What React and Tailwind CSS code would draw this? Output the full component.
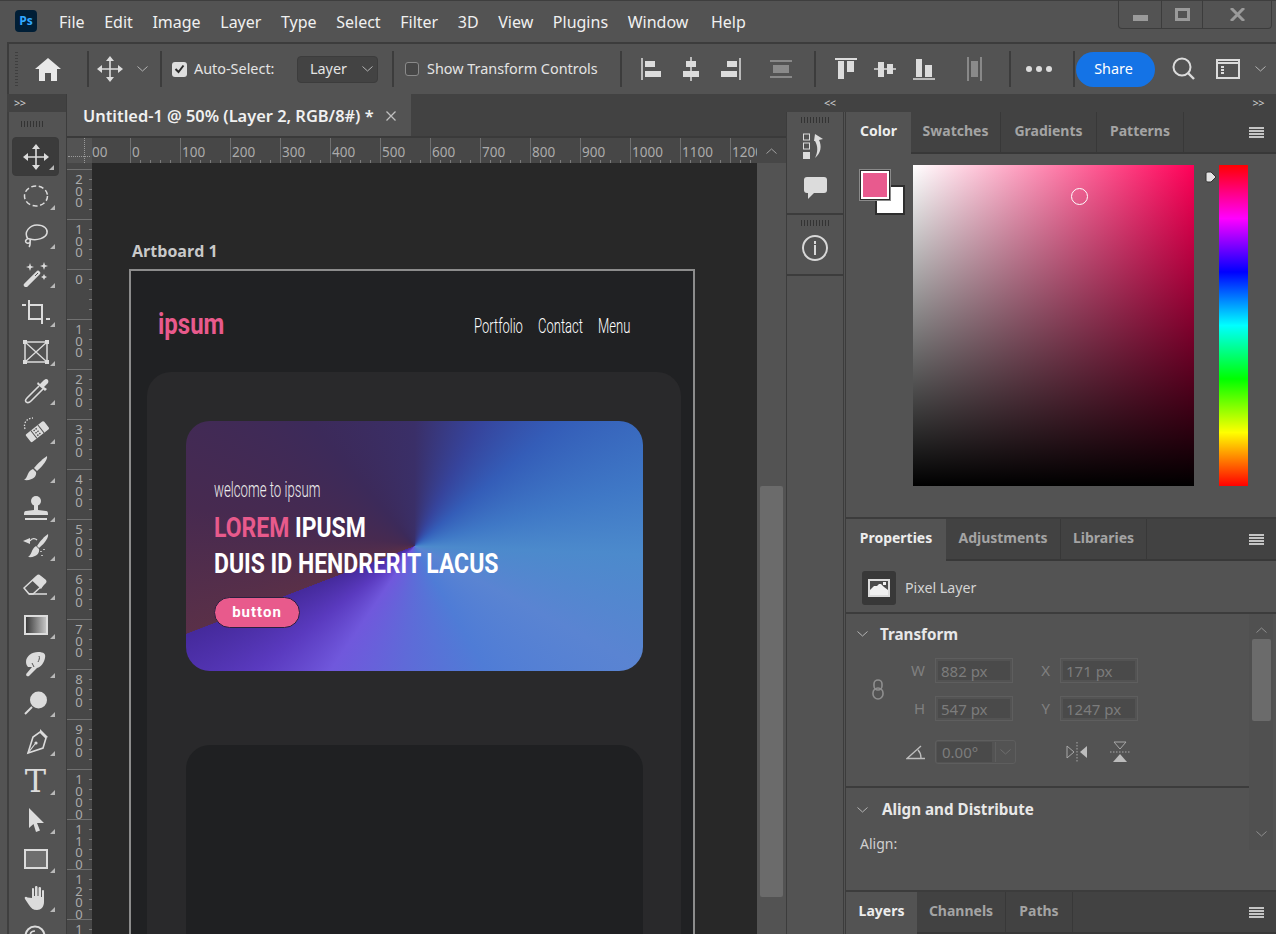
import React from 'react';

const MENU = ['File', 'Edit', 'Image', 'Layer', 'Type', 'Select', 'Filter', '3D', 'View', 'Plugins', 'Window'];
const RULER_H = ['0', '100', '200', '300', '400', '500', '600', '700', '800', '900', '1000', '1100', '1200'];
const RULER_V = ['200', '100', '0', '100', '200', '300', '400', '500', '600', '700', '800', '900', '1000', '1100', '1200', '1300'];

const Svg = ({ w = 26, h = 26, className = '', children }) => (
  <svg width={w} height={h} viewBox={`0 0 ${w} ${h}`} className={className} fill="none">
    {children}
  </svg>
);

const C = '#dcdcdc';

const MoveIcon = () => (
  <Svg w={26} h={26}>
    <path d="M13 3V23M3 13H23" stroke={C} strokeWidth="1.6" />
    <path d="M13 0L9 5H17ZM13 26L9 21H17ZM0 13L5 9V17ZM26 13L21 9V17Z" fill={C} />
  </Svg>
);

const TOOLS = [
  <MoveIcon />,
  <Svg><ellipse cx="13" cy="13" rx="11.5" ry="10" stroke={C} strokeWidth="1.5" strokeDasharray="5 2.6" /></Svg>,
  <Svg><path d="M5 17C0 10 7 3 14 3C21 3 25 7 24 11C23 16 14 19 7 17C3 16 1 20 4 21C7 22 8 19 7 17C7 20 8 23 6 25" stroke={C} strokeWidth="1.5" /></Svg>,
  <Svg>
    <path d="M3 24L15 12" stroke={C} strokeWidth="4.5" strokeLinecap="round" />
    <path d="M12 15L15 12" stroke="#535353" strokeWidth="1" />
    <path d="M7 2L8 5L11 6L8 7L7 10L6 7L3 6L6 5ZM21 1L22 4L25 5L22 6L21 9L20 6L17 5L20 4ZM21 13L22 15L24 16L22 17L21 19L20 17L18 16L20 15Z" fill={C} />
  </Svg>,
  <Svg w={28} h={28}><path d="M0 6H4M7 1V20H21M7 6H20V25M24 20H28" stroke={C} strokeWidth="2" /></Svg>,
  <Svg>
    <rect x="2" y="3" width="22" height="20" stroke={C} strokeWidth="1.5" />
    <path d="M2 3L24 23M24 3L2 23" stroke={C} strokeWidth="1.3" />
    <path d="M0 1H4V5H0ZM22 1H26V5H22ZM0 21H4V25H0ZM22 21H26V25H22Z" fill={C} />
  </Svg>,
  <Svg>
    <path d="M16 8L4 20C2 22 2 24 4 24.5C6 25 7 24 8 23L20 11" stroke={C} strokeWidth="1.6" />
    <path d="M14 6L22 13L24 11L21 9L25 5C26 3 25 1 23 1C22 1 21 2 20 3L17 6L15 4Z" fill={C} />
  </Svg>,
  <Svg>
    <g transform="rotate(-38 14 15)">
      <rect x="3" y="10" width="23" height="10" rx="1.5" fill={C} />
      <path d="M10 10V20M19 10V20" stroke="#535353" strokeWidth="1" />
      <path d="M12 12H17M12 15H17M12 18H17" stroke="#535353" strokeWidth="1.4" strokeDasharray="1.5 1" />
    </g>
    <path d="M2 12C0 6 4 1 10 1" stroke={C} strokeWidth="1.3" strokeDasharray="1.5 1.5" />
  </Svg>,
  <Svg>
    <path d="M24 0C25 3 20 10 14 15L11 12C15 7 21 2 24 0Z" fill={C} />
    <path d="M10 13L13 16C14 20 10 25 1 24C5 22 4 15 10 13Z" fill={C} />
  </Svg>,
  <Svg>
    <circle cx="13" cy="6" r="5" fill={C} />
    <path d="M11 10H15V15L23 16C25 16 25 18 25 20H1C1 18 1 16 3 16L11 15Z" fill={C} />
    <path d="M2 24H24" stroke={C} strokeWidth="2" />
  </Svg>,
  <Svg w={28} h={26}>
    <path d="M26 0C27 3 23 9 17 14L15 12C18 7 23 2 26 0Z" fill={C} />
    <path d="M14 12L17 15C18 19 14 24 6 23C10 21 9 15 14 12Z" fill={C} />
    <path d="M8 7C10 4 13 4 15 6" stroke={C} strokeWidth="1.3" />
    <path d="M1 7L8 4V10Z" fill={C} />
    <path d="M19 17V18M22 15V16M20 21V22" stroke={C} strokeWidth="1.5" />
  </Svg>,
  <Svg w={26} h={24}>
    <path d="M1 14L14 2C15 1 16 1 17 2L22 6C23 7 23 8 22 9L10 20H6Z" stroke={C} strokeWidth="1.5" />
    <path d="M9 6.5L18 15L22 9C23 8 23 7 22 6L17 2C16 1 15 1 14 2Z" fill={C} />
    <path d="M6 20H24" stroke={C} strokeWidth="1.5" />
  </Svg>,
  <div className="w-[24px] h-[20px] border-2 border-[#dcdcdc] bg-[linear-gradient(to_right,#3a3a3a,#c4c4c4)]" />,
  <Svg>
    <path d="M3 11C3 5 9 1 15 1C21 1 23 3 22 7C21 12 18 16 14 17L6 25C4 26 2 24 4 22L9 16L5 16C4 15 3 13 3 11Z" fill={C} />
    <path d="M11 16L9 12M15 11C16 9 17 7 16 5" stroke="#535353" strokeWidth="1" />
  </Svg>,
  <Svg>
    <circle cx="15.5" cy="10" r="8.5" fill={C} />
    <path d="M9 17L2 24" stroke={C} strokeWidth="2" />
  </Svg>,
  <Svg>
    <path d="M17 3L23 9L20 19L5 24L10 8Z" stroke={C} strokeWidth="1.6" />
    <path d="M17 0L25 8L23 9L17 3Z" fill={C} />
    <path d="M5 24L12 15" stroke={C} strokeWidth="1.2" />
    <circle cx="13" cy="14" r="1.6" fill={C} />
  </Svg>,
  <span className="text-[32px] leading-none text-[#dcdcdc] font-['DejaVu_Serif',serif]">T</span>,
  <Svg><path d="M6 1V21L10.5 17L13 25L17 23.5L14 16H21Z" fill={C} /></Svg>,
  <div className="w-[24px] h-[20px] border-2 border-[#dcdcdc] bg-[#6e6e6e]" />,
  <Svg>
    <path d="M9 13V4C9 2.5 11 2.5 11 4V11H12V2C12 .5 14.5 .5 14.5 2V11H15.5V3C15.5 1.5 18 1.5 18 3V12H19V6C19 4.5 21 4.5 21 6V17C21 22 18 25 14 25C10 25 8 23 6 20L2 14C1 12 3 11 4.5 12.5Z" fill={C} />
  </Svg>,
  <Svg><circle cx="12" cy="12" r="9.5" stroke={C} strokeWidth="2" /><path d="M7 12C7 9 9 7 12 7" stroke={C} strokeWidth="1.5" /></Svg>,
];

// little triangle in the corner of a tool button
const Corner = () => (
  <svg width="5" height="5" viewBox="0 0 5 5" className="absolute right-[4px] bottom-[5px]">
    <path d="M5 0V5H0Z" fill="#b8b8b8" />
  </svg>
);

const Sep = ({ className = '' }) => <div className={`w-[2px] h-[36px] bg-[#3c3c3c] shrink-0 ${className}`} />;

const Cell = ({ className = '', children }) => (
  <div className={`flex items-center justify-center shrink-0 ${className}`}>{children}</div>
);

const Chevron = ({ className = '', color = '#b4b4b4' }) => (
  <svg width="11" height="6" viewBox="0 0 11 6" className={className} fill="none">
    <path d="M.5 .5L5.5 5L10.5 .5" stroke={color} strokeWidth="1" />
  </svg>
);

const Hamburger = () => (
  <div className="flex flex-col gap-[1px] w-[15px]">
    <div className="h-[2px] bg-[#c4c4c4]" />
    <div className="h-[2px] bg-[#c4c4c4]" />
    <div className="h-[2px] bg-[#c4c4c4]" />
    <div className="h-[2px] bg-[#c4c4c4]" />
  </div>
);

const Gripper = ({ className = '' }) => (
  <div className={`h-[6px] bg-[repeating-linear-gradient(90deg,#333_0_1px,transparent_1px_3px)] ${className}`} />
);

const TitleBar = () => (
  <div className="h-[42px] flex items-start shrink-0 relative border-t border-[#3e3e3e]">
    <div className="ml-[15px] mt-[9px] w-[22px] h-[22px] rounded-[4px] bg-[#001e36] flex items-center justify-center">
      <span className="text-[12px] font-bold text-[#31a8ff] leading-none font-['Open_Sans',sans-serif]">Ps</span>
    </div>
    <nav className="flex gap-[19.6px] ml-[22px] mt-[9px] text-[16px] leading-[24px] text-[#f0f0f0]">
      {MENU.map(m => <span key={m}>{m}</span>)}
      <span className="ml-[3px]">Help</span>
    </nav>
    <div className="ml-auto mr-[4px] flex h-[29px] w-[154px] border-x border-b border-[#3c3c3c] rounded-b-[4px] -mt-px">
      <Cell className="w-[43px] border-r border-[#3c3c3c]"><div className="w-[15px] h-[6px] bg-[#9a9a9a] mt-[7px]" /></Cell>
      <Cell className="w-[41px] border-r border-[#3c3c3c]"><div className="w-[15px] h-[13px] border-[3px] border-[#9a9a9a]" /></Cell>
      <Cell className="flex-1">
        <svg width="15" height="13" viewBox="0 0 15 13"><path d="M1 0L14 13M14 0L1 13" stroke="#9a9a9a" strokeWidth="3" /></svg>
      </Cell>
    </div>
  </div>
);

const AlignIcon = ({ children }) => <Svg w={24} h={26}>{children}</Svg>;

const ToolOptions = () => (
  <div className="h-[52px] ml-[7px] flex items-center shrink-0 border-t-2 border-l-2 border-[#3c3c3c] text-[14.4px] text-[#e4e4e4]">
    <Cell className="w-[19px] justify-start pl-[6px]">
      <div className="w-[3px] h-[34px] bg-[repeating-linear-gradient(180deg,#3f3f3f_0_1px,transparent_1px_3px)]" />
    </Cell>
    <Cell className="w-[40px]">
      <Svg w={26} h={24}><path d="M13 1L0 12H4V24H10V16H16V24H22V12H26Z" fill="#e8e8e8" /></Svg>
    </Cell>
    <Sep className="ml-[19px]" />
    <Cell className="w-[42px]"><MoveIcon /></Cell>
    <Cell className="w-[22px]"><Chevron /></Cell>
    <Sep className="ml-[7px]" />
    <div className="ml-[10px] w-[15px] h-[15px] rounded-[3px] bg-[#dedede] flex items-center justify-center shrink-0">
      <svg width="11" height="10" viewBox="0 0 11 10" fill="none"><path d="M1.5 5L4.5 8L9.5 1.5" stroke="#2c2c2c" strokeWidth="2" /></svg>
    </div>
    <span className="ml-[7px] w-[80px] whitespace-nowrap shrink-0">Auto-Select:</span>
    <div className="ml-[23px] w-[81px] h-[27px] rounded-[4px] bg-[#434343] border border-[#3c3c3c] flex items-center pl-[12px] shrink-0">
      <span>Layer</span>
      <Chevron className="ml-auto mr-[4px]" />
    </div>
    <Sep className="ml-[14px]" />
    <div className="ml-[11px] w-[14px] h-[14px] rounded-[3px] border border-[#8a8a8a] bg-[#474747] shrink-0" />
    <span className="ml-[8px] w-[170px] whitespace-nowrap shrink-0">Show Transform Controls</span>
    <Sep className="ml-[23px]" />
    <Cell className="w-[39px] ml-[10px]">
      <AlignIcon><path d="M2 2V24" stroke={C} strokeWidth="1.5" /><rect x="5" y="5" width="10" height="6" fill={C} /><rect x="5" y="15" width="16" height="6" fill={C} /></AlignIcon>
    </Cell>
    <Cell className="w-[39px]">
      <AlignIcon><path d="M12 1V25" stroke={C} strokeWidth="1.5" /><rect x="7" y="5" width="10" height="6" fill={C} /><rect x="4" y="15" width="16" height="6" fill={C} /></AlignIcon>
    </Cell>
    <Cell className="w-[39px]">
      <AlignIcon><path d="M22 2V24" stroke={C} strokeWidth="1.5" /><rect x="9" y="5" width="10" height="6" fill={C} /><rect x="3" y="15" width="16" height="6" fill={C} /></AlignIcon>
    </Cell>
    <Cell className="w-[39px] ml-[12px]">
      <AlignIcon><path d="M1 5H23M1 21H23" stroke="#9a9a9a" strokeWidth="1.5" /><rect x="4" y="9" width="16" height="8" fill="#8a8a8a" /></AlignIcon>
    </Cell>
    <Sep className="ml-[14px]" />
    <Cell className="w-[39px] ml-[10px]">
      <AlignIcon><path d="M1 3H23" stroke={C} strokeWidth="2" /><rect x="4" y="5" width="6" height="18" fill={C} /><rect x="13" y="5" width="7" height="11" fill={C} /></AlignIcon>
    </Cell>
    <Cell className="w-[39px]">
      <AlignIcon><path d="M1 13H23" stroke={C} strokeWidth="1.5" /><rect x="5" y="6" width="6" height="15" fill={C} /><rect x="14" y="8" width="6" height="10" fill={C} /></AlignIcon>
    </Cell>
    <Cell className="w-[39px]">
      <AlignIcon><path d="M1 23H23" stroke={C} strokeWidth="1.5" /><rect x="4" y="3" width="6" height="18" fill={C} /><rect x="13" y="9" width="7" height="12" fill={C} /></AlignIcon>
    </Cell>
    <Cell className="w-[39px] ml-[12px]">
      <AlignIcon><path d="M5 1V25M18 1V25" stroke="#9a9a9a" strokeWidth="1.5" /><rect x="8" y="5" width="7" height="16" fill="#8a8a8a" /></AlignIcon>
    </Cell>
    <Sep className="ml-[15px]" />
    <Cell className="w-[56px] gap-[4px]">
      <div className="w-[6px] h-[6px] rounded-full bg-[#dcdcdc]" />
      <div className="w-[6px] h-[6px] rounded-full bg-[#dcdcdc]" />
      <div className="w-[6px] h-[6px] rounded-full bg-[#dcdcdc]" />
    </Cell>
    <Sep className="ml-[6px]" />
    <div className="ml-[1px] w-[79px] h-[35px] rounded-full bg-[#1473e6] flex items-center justify-center text-white shrink-0 pr-[4px]">Share</div>
    <Cell className="ml-[12px] w-[34px]">
      <Svg w={24} h={24}><circle cx="10" cy="10" r="8.5" stroke={C} strokeWidth="2" /><path d="M16 16L22 22" stroke={C} strokeWidth="2.4" /></Svg>
    </Cell>
    <Cell className="ml-[8px] w-[38px]">
      <div className="w-[24px] h-[20px] border-2 border-[#dcdcdc] flex flex-col">
        <div className="h-[3px] border-b-2 border-[#dcdcdc]" />
        <div className="ml-[3px] mt-[2px] w-[3px] h-[9px] bg-[repeating-linear-gradient(180deg,#dcdcdc_0_2px,transparent_2px_3px)]" />
      </div>
    </Cell>
    <Cell className="ml-[1px] w-[24px]"><Chevron /></Cell>
  </div>
);

const ToolBar = () => (
  <div className="w-[67px] shrink-0 flex flex-col border-r border-[#3c3c3c]">
    <div className="h-[18px] ml-[7px] bg-[#424242] text-[11px] leading-[18px] pl-[7px] text-[#d0d0d0] tracking-tighter">
      <span>&gt;&gt;</span>
    </div>
    <div className="flex-1 ml-[7px] border-l-2 border-[#3f3f3f] flex flex-col pl-[3px] pt-[9px]">
      <Gripper className="w-[24px] ml-[9px] mb-[2px]" />
      <div className="flex flex-col w-[47px] mt-[8px]">
        {TOOLS.map((tool, i) => (
          <div
            key={i}
            className={`relative h-[39px] shrink-0 flex items-center justify-center rounded-[4px] ${i === 0 ? 'bg-[#3b3b3b] border border-[#3a3a3a]' : ''}`}
          >
            {tool}
            {i < 20 && <Corner />}
          </div>
        ))}
      </div>
    </div>
  </div>
);

const Artboard = () => (
  <div className="w-[566px] border-2 border-b-0 border-[#8c8c8c] bg-[#202123] shrink-0">
    <header className="h-[101px] flex font-['Roboto',sans-serif]">
      <div className="ml-[27px] mt-[33px] w-[66px] text-[30px] leading-[40px] font-bold text-[#e85a8c] origin-left scale-x-[.8] whitespace-nowrap">ipsum</div>
      <div className="ml-auto mr-[62px] mt-[41px] flex gap-[15px] text-white text-[21px] leading-[28px] font-light">
        <span className="w-[49px] whitespace-nowrap origin-left scale-x-[.62]">Portfolio</span>
        <span className="w-[45px] whitespace-nowrap origin-left scale-x-[.62]">Contact</span>
        <span className="w-[33px] whitespace-nowrap origin-left scale-x-[.62]">Menu</span>
      </div>
    </header>
    <div className="ml-[16px] w-[534px] rounded-t-[24px] bg-[#29292b] pl-[39px] pr-[38px] pt-[49px]">
      <section className="h-[250px] rounded-[24px] pl-[28px] font-['Roboto',sans-serif] bg-[conic-gradient(from_0deg_at_50%_50%,#3a2f68_0deg,#36449c_28deg,#345db8_50deg,#3f78c6_75deg,#4c8acc_92deg,#5a84d2_118deg,#4f7cd6_150deg,#5f6ad8_185deg,#7058dc_214deg,#5a3abf_232deg,#452a9c_248.9deg,#5a3048_249deg,#472a50_280deg,#3c2a5a_320deg,#3a2f68_360deg)]">
        <div className="pt-[55px] text-[22px] leading-[28px] font-light text-[#ececec] origin-left scale-x-[.6] whitespace-nowrap">welcome to ipsum</div>
        <div className="mt-[6px] text-[28px] leading-[36px] font-bold text-white origin-left scale-x-[.82] whitespace-nowrap">
          <span className="text-[#e85a8c]">LOREM</span> IPUSM
        </div>
        <div className="text-[28px] leading-[36px] font-bold text-white origin-left scale-x-[.82] whitespace-nowrap">DUIS ID HENDRERIT LACUS</div>
        <div className="mt-[15px] w-[86px] h-[31px] rounded-full bg-[#e85a8c] border border-[#2c2040] flex items-center justify-center text-white text-[15px] font-bold tracking-[1px]">button</div>
      </section>
      <div className="mt-[74px] h-[400px] rounded-[24px] bg-[#1f2022]" />
    </div>
  </div>
);

const DocumentArea = () => (
  <div className="w-[719px] shrink-0 flex flex-col min-w-0">
    <div className="h-[44px] bg-[#424242] border-b-2 border-[#3a3a3a] flex shrink-0">
      <div className="w-[344px] h-[42px] bg-[#535353] flex items-center pl-[16px] pt-[2px] text-[16.4px] font-semibold text-[#f0f0f0] whitespace-nowrap">
        Untitled-1 @ 50% (Layer 2, RGB/8#) *
        <svg width="10" height="10" viewBox="0 0 10 10" className="ml-[12px]"><path d="M.5 .5L9.5 9.5M9.5 .5L.5 9.5" stroke="#c0c0c0" strokeWidth="1.3" /></svg>
      </div>
    </div>
    <div className="h-[25px] flex shrink-0 bg-[#474747] text-[13.5px] leading-[29px] text-[#ababab]">
      <div className="relative w-[25px] shrink-0 bg-[#535353]">
        <div className="absolute left-[1px] right-[2px] top-[18px] border-t border-dotted border-[#9a9a9a]" />
        <div className="absolute left-[17px] top-0 bottom-0 border-l border-dotted border-[#9a9a9a]" />
      </div>
      <div className="w-[665px] flex overflow-hidden shrink-0">
        <div className="w-[38px] shrink-0 overflow-hidden">00</div>
        {RULER_H.map(n => (
          <div key={n} className="w-[50px] shrink-0 pl-[1px] border-l border-[#707070] bg-[repeating-linear-gradient(90deg,transparent_0_9px,#7a7a7a_9px_10px)] bg-[length:100%_3px] bg-no-repeat bg-bottom">{n}</div>
        ))}
      </div>
      <div className="flex-1 flex items-center justify-center">
        <svg width="11" height="6" viewBox="0 0 11 6" fill="none"><path d="M.5 5.5L5.5 1L10.5 5.5" stroke="#a0a0a0" /></svg>
      </div>
    </div>
    <div className="flex-1 flex min-h-0">
      <div className="w-[25px] shrink-0 bg-[#474747] overflow-hidden text-[13px] leading-[12px] text-[#ababab] text-center">
        <div className="h-[6px]" />
        {RULER_V.map((n, i) => (
          <div key={i} className="h-[50px] pr-[1px] border-t border-[#707070] pt-[3px] bg-[repeating-linear-gradient(180deg,transparent_0_9px,#7a7a7a_9px_10px)] bg-[length:3px_100%] bg-no-repeat bg-right">
            {n.split('').map((d, j) => <div key={j} className="h-[11.7px]">{d}</div>)}
          </div>
        ))}
      </div>
      <div className="w-[665px] shrink-0 bg-[#282828] pl-[37px] pt-[77px] overflow-hidden">
        <div className="h-[29px] pl-[3px] text-[16px] leading-[22px] font-bold text-[#c9c9c9] font-['Open_Sans',sans-serif]">Artboard 1</div>
        <Artboard />
      </div>
      <div className="flex-1 bg-[#535353] px-[3px] pt-[323px] pb-[37px] flex">
        <div className="w-[18px] flex-1 bg-[#6b6b6b] rounded-[2px]" />
      </div>
    </div>
  </div>
);

const CollapsedPanels = () => (
  <div className="w-[60px] shrink-0 flex flex-col">
    <div className="w-[58px] flex-1 flex flex-col border-x border-[#3c3c3c]">
      <div className="h-[103px] border-b-2 border-[#3c3c3c] flex flex-col items-center">
        <Gripper className="w-[28px] mt-[5px]" />
        <div className="mt-[10px]">
          <Svg w={24} h={26}>
            <rect x=".5" y="1" width="6" height="6" stroke={C} />
            <rect x=".5" y="10" width="6" height="6" stroke={C} />
            <rect x="0" y="19" width="7" height="7" fill={C} />
            <path d="M12 1L20 6L16 7C19 13 18 20 12 25C15 19 15 13 12 8L11 8Z" fill={C} />
          </Svg>
        </div>
        <div className="mt-[18px] w-[23px] h-[16px] bg-[#dcdcdc] rounded-[3px] relative">
          <div className="absolute left-[4px] top-[16px] w-0 h-0 border-t-[6px] border-t-[#dcdcdc] border-r-[6px] border-r-transparent" />
        </div>
      </div>
      <div className="h-[61px] border-b-2 border-[#3c3c3c] flex flex-col items-center">
        <Gripper className="w-[28px] mt-[5px]" />
        <div className="mt-[9px] w-[26px] h-[26px] rounded-full border-2 border-[#d8d8d8] flex flex-col items-center justify-center gap-[1px]">
          <div className="w-[2px] h-[3px] bg-[#d8d8d8]" />
          <div className="w-[2px] h-[10px] bg-[#d8d8d8]" />
        </div>
      </div>
    </div>
  </div>
);

const Tab = ({ active, className = '', children }) => (
  <div className={`flex items-center justify-center shrink-0 text-[14px] font-bold ${active ? 'pb-[5px] text-[#ededed] bg-[#535353]' : 'pb-[3px] text-[#a4a4a4] bg-[#424242] border-b-2 border-r border-[#383838]'} ${className}`}>
    {children}
  </div>
);

const TabBar = ({ tabs, className = '' }) => (
  <div className={`h-[42px] flex bg-[#424242] shrink-0 relative ${className}`}>
    {tabs.map((t, i) => <Tab key={t[0]} active={i === 0} className={t[1]}>{t[0]}</Tab>)}
    <div className="flex-1 border-b-2 border-[#383838] flex items-center justify-end pr-[12px]"><Hamburger /></div>
  </div>
);

const ColorPanel = () => (
  <div className="h-[405px] shrink-0 flex flex-col">
    <TabBar tabs={[['Color', 'w-[65px]'], ['Swatches', 'w-[90px]'], ['Gradients', 'w-[96px]'], ['Patterns', 'w-[87px]']]} />
    <div className="flex pt-[11px]">
      <div className="ml-[13px] mt-[4px] w-[54px] relative h-[47px] shrink-0">
        <div className="absolute left-[16px] top-[16px] w-[30px] h-[30px] bg-white border-2 border-[#2e2e2e]" />
        <div className="absolute left-0 top-0 w-[32px] h-[32px] border border-[#8a8a8a]">
          <div className="w-full h-full border-[1.5px] border-[#2a2a2a]">
            <div className="w-full h-full bg-[#e85a8e] border-2 border-white" />
          </div>
        </div>
      </div>
      <div className="relative w-[281px] h-[321px] shrink-0 bg-[linear-gradient(to_top,#000,transparent),linear-gradient(to_right,#fff,#ff0058)]">
        <div className="absolute left-[158px] top-[23px] w-[17px] h-[17px] rounded-full border border-white" />
      </div>
      <div className="relative ml-[25px] w-[29px] h-[321px] shrink-0 bg-[linear-gradient(to_bottom,#f00,#f0f,#00f,#0ff,#0f0,#ff0,#f00)]">
        <svg width="12" height="12" viewBox="0 0 12 12" className="absolute -left-[14px] top-[6px]">
          <path d="M3 1H6L11 6L6 11H3C1.5 11 1 10 1 9V3C1 2 1.5 1 3 1Z" fill="#e4e4e4" stroke="#333" />
        </svg>
      </div>
    </div>
  </div>
);

const Field = ({ className = '', children }) => (
  <div className={`h-[25px] border border-[#5e5e5e] bg-[#535353] p-[2px] shrink-0 ${className}`}>
    <div className="h-full bg-[#4a4a4a] pl-[3px] text-[15px] leading-[20px] text-[#7c7c7c]">{children}</div>
  </div>
);

const FieldLabel = ({ className = '', children }) => (
  <span className={`text-[15px] text-[#808080] shrink-0 text-right ${className}`}>{children}</span>
);

const PropertiesPanel = () => (
  <div className="flex-1 flex flex-col border-t-2 border-[#3c3c3c] min-h-0">
    <TabBar tabs={[['Properties', 'w-[100px]'], ['Adjustments', 'w-[115px]'], ['Libraries', 'w-[86px]']]} />
    <div className="h-[53px] flex items-center pl-[16px] pt-[2px] border-b-2 border-[#3c3c3c] shrink-0">
      <div className="w-[34px] h-[34px] rounded-[3px] bg-[#383838] flex items-center justify-center">
        <svg width="22" height="18" viewBox="0 0 22 18">
          <rect width="22" height="18" fill="#dcdcdc" />
          <rect x="2" y="2" width="18" height="9" fill="#4a4a4a" />
          <path d="M2 11L6 7H9L11 5H13L16 8L20 11V16H2Z" fill="#f0f0f0" />
          <rect x="15" y="3" width="3" height="3" fill="#f0f0f0" />
        </svg>
      </div>
      <span className="ml-[9px] pt-[1px] text-[14.2px] text-[#d4d4d4]">Pixel Layer</span>
    </div>
    <div className="flex-1 flex min-h-0">
      <div className="w-[403px] shrink-0">
        <div className="h-[174px] border-b-2 border-[#3c3c3c]">
          <div className="h-[40px] flex items-center pl-[11px]">
            <Chevron />
            <span className="ml-[12px] text-[15.2px] font-bold text-[#e8e8e8]">Transform</span>
          </div>
          <div className="flex mt-[4px]">
            <div className="w-[65px] flex items-center justify-end pr-[27px] h-[63px] shrink-0">
              <svg width="12" height="21" viewBox="0 0 12 21" fill="none">
                <rect x="2" y="1" width="8" height="10" rx="4" stroke="#8e8e8e" strokeWidth="1.6" />
                <rect x="1" y="9" width="10" height="11" rx="5" stroke="#8e8e8e" strokeWidth="1.6" />
              </svg>
            </div>
            <div className="flex flex-col gap-[13px]">
              <div className="flex items-center">
                <FieldLabel className="w-[14px]">W</FieldLabel>
                <Field className="ml-[10px] w-[78px]">882 px</Field>
                <FieldLabel className="ml-[27px] w-[10px]">X</FieldLabel>
                <Field className="ml-[10px] w-[78px]">171 px</Field>
              </div>
              <div className="flex items-center">
                <FieldLabel className="w-[14px]">H</FieldLabel>
                <Field className="ml-[10px] w-[78px]">547 px</Field>
                <FieldLabel className="ml-[27px] w-[10px]">Y</FieldLabel>
                <Field className="ml-[10px] w-[78px]">1247 px</Field>
              </div>
            </div>
          </div>
          <div className="flex items-center mt-[19px] pl-[60px]">
            <svg width="20" height="16" viewBox="0 0 20 16" fill="none">
              <path d="M19 14.5H1L15 2M12 6C14 8 15 11 15 14" stroke="#bcbcbc" strokeWidth="1.4" />
            </svg>
            <div className="ml-[9px] w-[81px] h-[24px] rounded-[3px] border border-[#5e5e5e] flex p-[1px]">
              <div className="w-[55px] bg-[#4a4a4a] pl-[5px] text-[15px] leading-[20px] text-[#7c7c7c]">0.00°</div>
              <div className="flex-1 border-l border-[#5e5e5e] ml-[3px] flex items-center justify-center"><Chevron color="#6e6e6e" /></div>
            </div>
            <Cell className="ml-[49px] w-[24px]">
              <svg width="24" height="24" viewBox="0 0 24 24" fill="none">
                <path d="M12 2V23" stroke="#a8a8a8" strokeDasharray="1.5 1.5" />
                <path d="M2 6L9 12L2 18Z" stroke="#a8a8a8" />
                <path d="M22 6L15 12L22 18Z" fill="#bcbcbc" />
              </svg>
            </Cell>
            <Cell className="ml-[19px] w-[24px]">
              <svg width="24" height="24" viewBox="0 0 24 24" fill="none">
                <path d="M2 12H22" stroke="#a8a8a8" strokeDasharray="1.5 1.5" />
                <path d="M6 2L12 9L18 2Z" stroke="#a8a8a8" />
                <path d="M5 22L12 14L19 22Z" fill="#bcbcbc" />
              </svg>
            </Cell>
          </div>
        </div>
        <div className="h-[43px] flex items-center pl-[11px]">
          <Chevron />
          <span className="ml-[14px] text-[15.2px] font-bold text-[#e8e8e8]">Align and Distribute</span>
        </div>
        <div className="pl-[14px] mt-[2px] text-[14px] text-[#d0d0d0]">Align:</div>
      </div>
      <div className="w-[24px] h-[236px] shrink-0 bg-[#505050] flex flex-col items-center">
        <svg width="11" height="6" viewBox="0 0 11 6" fill="none" className="mt-[13px]"><path d="M.5 5.5L5.5 1L10.5 5.5" stroke="#8e8e8e" /></svg>
        <div className="mt-[6px] w-[19px] h-[82px] rounded-[2px] bg-[#6b6b6b]" />
        <svg width="11" height="6" viewBox="0 0 11 6" fill="none" className="mt-auto mb-[13px]"><path d="M.5 .5L5.5 5L10.5 .5" stroke="#8e8e8e" /></svg>
      </div>
    </div>
  </div>
);

const App = () => (
  <div className="w-[1276px] h-[934px] overflow-hidden bg-[#535353] flex flex-col font-['Noto_Sans',sans-serif]">
    <TitleBar />
    <ToolOptions />
    <div className="flex-1 flex min-h-0">
      <ToolBar />
      <DocumentArea />
      <div className="w-[490px] shrink-0 flex flex-col">
        <div className="h-[18px] bg-[#424242] flex items-center text-[11px] text-[#d0d0d0] tracking-tighter shrink-0">
          <span className="ml-[38px]">&lt;&lt;</span>
          <span className="ml-auto mr-[12px]">&gt;&gt;</span>
        </div>
        <div className="flex-1 flex min-h-0">
          <CollapsedPanels />
          <div className="w-[431px] -ml-px shrink-0 flex flex-col border-l border-[#3c3c3c]">
            <ColorPanel />
            <PropertiesPanel />
            <div className="border-t-2 border-[#3c3c3c]">
              <TabBar tabs={[['Layers', 'w-[71px]'], ['Channels', 'w-[89px]'], ['Paths', 'w-[67px]']]} />
            </div>
          </div>
        </div>
      </div>
    </div>
  </div>
);

export default App;
